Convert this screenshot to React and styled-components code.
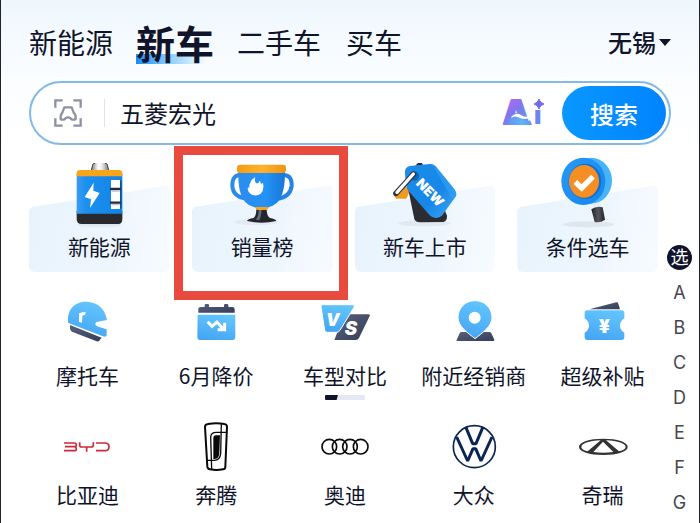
import React, { useState } from "react";
import styled, { createGlobalStyle, css } from "styled-components";

const GlobalStyle = createGlobalStyle`
  * {
    box-sizing: border-box;
  }
  body {
    margin: 0;
    background: #fff;
    color: #10142b;
    font-family: "Noto Sans CJK SC", "Noto Sans", sans-serif;
  }
  button, input {
    font-family: inherit;
    color: inherit;
    border: 0;
    padding: 0;
    background: none;
  }
  button {
    cursor: pointer;
  }
  a {
    color: inherit;
    text-decoration: none;
  }
`;

const ScanIcon = () => (
  <svg width="28" height="28" viewBox="0 0 84 84" fill="none" stroke="#8e91a2" strokeWidth="7">
    <path d="M4 26V4H26M58 4H80V26M80 58V80H58M26 80H4V58" />
    <path
      d="M31 25H53L59 41Q65 46 65 53V60Q65 62 62 62H55Q51 62 50 58Q42 52 34 58Q33 62 29 62H22Q20 62 20 60V53Q20 46 25 41Z"
      strokeLinejoin="round"
    />
  </svg>
);

const AiLogo = () => (
  <svg width="46" height="52" viewBox="-2 -12 46 52" role="img" aria-label="Ai">
    <defs>
      <linearGradient id="ai" x1="0" y1="0" x2="0.5" y2="1">
        <stop offset="0.2" stopColor="#b765f3" />
        <stop offset="0.55" stopColor="#7d78ee" />
        <stop offset="1" stopColor="#6a9cf3" />
      </linearGradient>
      <linearGradient id="wave">
        <stop offset="0" stopColor="#6f8cf0" />
        <stop offset="0.6" stopColor="#58b8f8" />
        <stop offset="1" stopColor="#6a8ff0" />
      </linearGradient>
    </defs>
    <text
      x="1"
      y="25"
      fontFamily="Inter"
      fontSize="33"
      fontWeight="900"
      fill="url(#ai)"
      stroke="url(#ai)"
      strokeWidth="2"
      strokeLinejoin="round"
    >
      A
    </text>
    <path d="M7 20Q14 16 20 20T28 21L30 26H5Z" fill="url(#wave)" />
    <path d="M10 17Q15 13 19 16T27 17L28 19Q22 21 18 19Q13 16 9 19Z" fill="#fff" />
    <text x="32" y="25" fontFamily="Inter" fontSize="25" fontWeight="900" fill="#6a86ef">
      ı
    </text>
    <path d="M37 0Q38 4 42 5Q38 6 37 10Q36 6 32 5Q36 4 37 0Z" fill="#7467e8" stroke="#7467e8" />
  </svg>
);

const BatteryIcon = () => (
  <svg width="70" height="70" viewBox="133 39 210 210">
    <defs>
      <linearGradient id="bat" x1="0" y1="0" x2="1" y2="0">
        <stop offset="0" stopColor="#3d9cf0" />
        <stop offset="0.2" stopColor="#1c90ef" />
        <stop offset="1" stopColor="#1183e6" />
      </linearGradient>
      <linearGradient id="cap">
        <stop offset="0" stopColor="#777" />
        <stop offset="0.4" stopColor="#fff" />
        <stop offset="0.6" stopColor="#eee" />
        <stop offset="1" stopColor="#777" />
      </linearGradient>
      <linearGradient id="floor" x1="0" y1="0" x2="0" y2="1">
        <stop offset="0" stopColor="#cfd6dd" />
        <stop offset="1" stopColor="#cfd6dd" stopOpacity="0" />
      </linearGradient>
    </defs>
    <ellipse cx="239" cy="239" rx="64" ry="12" fill="url(#floor)" />
    <path d="M214 78L218 60Q219 54 226 54H256Q263 54 264 60L268 78Z" fill="url(#cap)" />
    <path d="M215 76L219 60Q220 55 226 55M267 76L263 60Q262 55 256 55" stroke="#444" strokeWidth="3" fill="none" />
    <path d="M171 198V222Q171 237 186 237H296Q308 237 308 222V198Z" fill="#292a2e" />
    <path d="M171 86H308V206H171Z" fill="url(#bat)" />
    <path d="M171 94V85Q171 75 182 75H297Q308 75 308 85V94Z" fill="#f9a51c" />
    <path d="M222 113L195 156L214 163L211 189L240 144L221 137Z" fill="#fff" />
    <path d="M274 105H301V192H274Z" fill="#fff" />
    <path d="M301 104L306 108V188L301 192Z" fill="#0b55a0" />
    <path d="M271 132H303M271 173H303" stroke="#232c3b" strokeWidth="7" />
    <path d="M276 138H300M276 179H300" stroke="#b9c4d0" strokeWidth="4" />
  </svg>
);

const TrophyIcon = () => (
  <svg width="70" height="70" viewBox="172 54 210 210">
    <defs>
      <linearGradient id="cup">
        <stop offset="0" stopColor="#2c8cee" />
        <stop offset="0.6" stopColor="#2492f5" />
        <stop offset="1" stopColor="#1a76d9" />
      </linearGradient>
      <linearGradient id="rim">
        <stop offset="0" stopColor="#f59a12" />
        <stop offset="0.5" stopColor="#ffb22c" />
        <stop offset="1" stopColor="#f09513" />
      </linearGradient>
    </defs>
    <ellipse cx="260" cy="246" rx="66" ry="10" fill="#dfe5eb" opacity="0.7" />
    <path d="M215 105Q188 102 188 137Q190 172 232 176" fill="none" stroke="#2b8bec" strokeWidth="12" />
    <path d="M336 105Q367 102 366 137Q362 172 322 176" fill="none" stroke="#2484e6" strokeWidth="12" />
    <path d="M206 90H346Q347 150 331 178Q315 203 276 205Q236 203 220 178Q204 150 206 90Z" fill="url(#cup)" />
    <rect x="202" y="74" width="147" height="25" rx="9" fill="url(#rim)" />
    <path d="M232 243Q234 237 252 234Q260 228 260 208H291Q291 228 301 234Q318 237 320 243Q276 253 232 243Z" fill="#23262c" />
    <path d="M267 210H276Q274 230 270 240L258 239Q267 229 267 210Z" fill="#646a73" />
    <path d="M255 201H299L292 210H262Z" fill="#f4a623" />
    <path d="M257 111Q253 124 260 130Q268 131 270 122Q274 126 273 132L280 129Q285 150 273 161Q261 170 247 164Q231 155 235 142L240 144Q237 136 242 128Q245 118 257 111Z" fill="#fff" />
  </svg>
);

const NewTagIcon = () => (
  <svg width="70" height="70" viewBox="121 39 210 210">
    <defs>
      <linearGradient id="tag" x1="0" y1="0" x2="1" y2="1">
        <stop offset="0" stopColor="#1d8de8" />
        <stop offset="0.6" stopColor="#1687e8" />
        <stop offset="1" stopColor="#3fa9f5" />
      </linearGradient>
    </defs>
    <ellipse cx="224" cy="235" rx="78" ry="9" fill="#dfe5eb" opacity="0.8" />
    <path d="M132 151L166 122L181 138L170 161H140Z" fill="#f19a20" />
    <path d="M175 130L194 222Q198 232 210 232L281 231Q293 228 292 212L283 190Z" fill="#2b2d33" />
    <path d="M196 62L205 54H216L222 62Z" fill="#2b2d33" />
    <path
      d="M166 85Q164 67 180 63L240 57Q250 56 258 64L313 131Q322 143 319 153L278 211Q265 224 248 216Q242 213 236 206L176 137Q170 130 168 112Z"
      fill="url(#tag)"
    />
    <path d="M258 64L313 131Q322 143 319 153L310 166L248 58Z" fill="#33a4f6" opacity="0.6" />
    <circle cx="194" cy="93" r="14" fill="#0b63b6" />
    <path d="M191 88L139 145" stroke="#35353b" strokeWidth="17" strokeLinecap="round" />
    <path d="M191 87L142 142" stroke="#fff" strokeWidth="10" strokeLinecap="round" />
    <text
      transform="translate(197 117) rotate(46)"
      fontFamily="Inter"
      fontSize="40"
      fontWeight="900"
      fill="#fff"
    >
      NEW
    </text>
  </svg>
);

const FilterIcon = () => (
  <svg width="70" height="70" viewBox="144 39 210 210" overflow="visible">
    <defs>
      <linearGradient id="lens" x1="0" y1="0" x2="1" y2="1">
        <stop offset="0" stopColor="#2a9af5" />
        <stop offset="1" stopColor="#1585ee" />
      </linearGradient>
      <linearGradient id="grip">
        <stop offset="0" stopColor="#1f2125" />
        <stop offset="0.5" stopColor="#55585e" />
        <stop offset="1" stopColor="#1f2125" />
      </linearGradient>
    </defs>
    <ellipse cx="250" cy="238" rx="78" ry="9" fill="#dbe3ea" opacity="0.8" />
    <ellipse cx="258" cy="107" rx="63" ry="69" fill="#45b4f9" />
    <path d="M262 176L286 172L289 190L266 194Z" fill="#e9edf1" />
    <ellipse cx="235" cy="109" rx="66" ry="71" fill="url(#lens)" />
    <ellipse cx="240" cy="109" rx="49" ry="53" fill="#136fd0" />
    <ellipse cx="237" cy="109" rx="45" ry="49" fill="#f58f24" />
    <path d="M211 111L230 129L264 95" fill="none" stroke="#fff" strokeWidth="16" />
    <path d="M259 193Q274 182 293 187L300 224Q287 234 269 231Z" fill="url(#grip)" />
  </svg>
);

// shared gradients of the small two-tone icons
const Tones = ({ id }) => (
  <defs>
    <linearGradient id={`${id}-blue`} x1="0.6" y1="0" x2="0.3" y2="1">
      <stop offset="0" stopColor="#62c5fd" />
      <stop offset="1" stopColor="#45a5f4" />
    </linearGradient>
    <linearGradient id={`${id}-dark`} x1="0" y1="0" x2="1" y2="1">
      <stop offset="0" stopColor="#59627c" />
      <stop offset="1" stopColor="#343c57" />
    </linearGradient>
  </defs>
);

const HelmetIcon = () => (
  <svg width="50" height="44" viewBox="96 33 150 132">
    <Tones id="helmet" />
    <path d="M120 108L215 146L207 156Q205 158 200 157L126 128Q120 125 120 118Z" fill="url(#helmet-dark)" />
    <path
      d="M115 102C109 62 134 38 169 38C204 39 226 60 231 93L203 98Q193 101 197 108Q200 113 208 114L230 121V138Q229 145 219 142Z"
      fill="url(#helmet-blue)"
    />
    <path d="M147 73Q158 68 167 68L166 77L157 80L156 101L147 99Z" fill="#fff" />
  </svg>
);

const PriceDropIcon = () => (
  <svg width="50" height="44" viewBox="483 33 150 132">
    <Tones id="drop" />
    <path d="M505 71V61Q505 54 513 54H524V49Q524 45 528 45H533Q537 45 537 49V54H582V49Q582 45 586 45H591Q595 45 595 49V54H607Q614 54 614 61V71Z" fill="url(#drop-dark)" />
    <path d="M503 77H616V143Q616 153 606 153H512Q502 153 502 143Z" fill="url(#drop-blue)" />
    <path d="M533 98L546 112L561 99L579 119" fill="none" stroke="#fff" strokeWidth="9" />
    <path d="M563 122H584V101" fill="none" stroke="#fff" strokeWidth="9" />
  </svg>
);

const CompareIcon = () => (
  <svg width="50" height="44" viewBox="90 33 150 132">
    <Tones id="vs" />
    <path d="M163 76H236Q241 76 239 81L207 147Q204 153 197 153H133Z" fill="url(#vs-dark)" />
    <path
      d="M97 47H188Q196 47 192 55L150 124Q146 130 139 130H112Q105 130 104 123L93 53Q92 47 97 47Z"
      fill="url(#vs-blue)"
      stroke="#fff"
      strokeWidth="3"
    />
    <text x="108" y="111" fontFamily="Inter" fontSize="51" fontWeight="900" fontStyle="italic" fill="#fff">
      V
    </text>
    <text x="164" y="137" fontFamily="Inter" fontSize="56" fontWeight="900" fontStyle="italic" fill="#fff">
      S
    </text>
  </svg>
);

const DealerIcon = () => (
  <svg width="50" height="44" viewBox="475 33 150 132">
    <Tones id="pin" />
    <path d="M512 129H596Q600 129 602 133L611 152Q612 156 607 156H501Q496 156 498 152L507 133Q509 129 512 129Z" fill="url(#pin-dark)" />
    <path
      d="M553 35C583 35 604 57 604 86C604 112 572 134 553 149C534 134 502 112 502 86C502 57 523 35 553 35Z"
      fill="url(#pin-blue)"
      stroke="#fff"
      strokeWidth="3"
    />
    <circle cx="552" cy="86" r="18" fill="#fff" />
  </svg>
);

const CouponIcon = () => (
  <svg width="50" height="44" viewBox="142 33 150 132">
    <Tones id="coupon" />
    <path d="M176 61L257 40Q262 39 263 44L268 61Z" fill="url(#coupon-dark)" />
    <path
      d="M170 64H272Q281 64 281 72V88Q268 96 268 110Q268 122 281 131V144Q281 153 272 153H170Q162 153 162 144V131Q175 122 175 110Q175 96 162 88V72Q162 64 170 64Z"
      fill="url(#coupon-blue)"
    />
    <text x="221" y="131" textAnchor="middle" fontFamily="Inter" fontSize="58" fontWeight="900" fill="#fff">
      ¥
    </text>
  </svg>
);

const BydLogo = () => (
  <svg width="50" height="50" viewBox="96 36 150 150" fill="none" stroke="#cb2a3a" strokeWidth="5">
    <path d="M102 99H133Q139 99 139 104Q139 110 133 110H105M133 110Q139 111 139 116Q139 122 133 122H102" />
    <path d="M149 97V104Q149 111 156 111H184Q190 111 190 104V97M170 111V125" />
    <path d="M198 99H227Q237 100 237 110Q237 121 227 122H198" />
  </svg>
);

const BestuneLogo = () => (
  <svg width="50" height="50" viewBox="483 36 150 150" fill="none" stroke="#090909">
    <path d="M534 42Q559 38 583 42Q591 43 591 51L586 170Q586 177 579 178Q559 182 540 178Q533 177 532 170L525 51Q525 43 534 42Z" strokeWidth="6" />
    <path d="M574 43L572 131Q570 151 553 151H532M588 67H559Q543 67 542 81L545 177" strokeWidth="4" />
    <path d="M558 76Q550 76 550 85V147H554Q568 146 568 129L570 76Z" fill="#090909" stroke="none" />
  </svg>
);

const AudiLogo = () => (
  <svg width="50" height="50" viewBox="90 36 150 150" fill="none" stroke="#0c0c0c" strokeWidth="5">
    <circle cx="118" cy="110" r="22" />
    <circle cx="149" cy="110" r="22" />
    <circle cx="180" cy="110" r="22" />
    <circle cx="212" cy="110" r="22" />
  </svg>
);

const VwLogo = () => (
  <svg width="50" height="50" viewBox="475 36 150 150" fill="none" stroke="#0b2553">
    <circle cx="551" cy="110" r="63" strokeWidth="5" />
    <path d="M526 53L546 101H556L576 53" strokeWidth="9" strokeLinejoin="bevel" />
    <path d="M498 81L531 153L547 116H555L571 153L604 81" strokeWidth="9" strokeLinejoin="bevel" />
  </svg>
);

const CheryLogo = () => (
  <svg width="50" height="50" viewBox="142 66 150 150">
    <path
      d="M218 116C260 116 291 126 291 141C291 155 260 165 218 165C176 165 145 155 145 141C145 126 176 116 218 116ZM210 121C174 123 152 131 152 141C152 146 159 151 171 154ZM226 121L265 154C278 151 285 146 285 141C285 131 262 123 226 121ZM217 125L188 156Q218 160 248 156Z"
      fill="#333"
      fillRule="evenodd"
    />
  </svg>
);

const tabs = ["新能源", "新车", "二手车", "买车"];

const cards = [
  { name: "新能源", icon: <BatteryIcon /> },
  { name: "销量榜", icon: <TrophyIcon />, marked: true },
  { name: "新车上市", icon: <NewTagIcon /> },
  { name: "条件选车", icon: <FilterIcon /> },
];

const services = [
  { name: "摩托车", icon: <HelmetIcon /> },
  { name: "6月降价", icon: <PriceDropIcon /> },
  { name: "车型对比", icon: <CompareIcon /> },
  { name: "附近经销商", icon: <DealerIcon /> },
  { name: "超级补贴", icon: <CouponIcon /> },
];

const brands = [
  { name: "比亚迪", icon: <BydLogo /> },
  { name: "奔腾", icon: <BestuneLogo /> },
  { name: "奥迪", icon: <AudiLogo /> },
  { name: "大众", icon: <VwLogo /> },
  { name: "奇瑞", icon: <CheryLogo /> },
];

const letters = ["选", "A", "B", "C", "D", "E", "F", "G"];

function App() {
  const [active, setActive] = useState("新车");
  const [keyword, setKeyword] = useState("五菱宏光");

  return (
    <Page>
      <GlobalStyle />
      <Header>
        <Tabs>
          {tabs.map((tab) => (
            <Tab key={tab} $active={tab === active} onClick={() => setActive(tab)}>
              {tab}
            </Tab>
          ))}
        </Tabs>
        <City>
          无锡
          <Caret />
        </City>
      </Header>

      <Search onSubmit={(e) => e.preventDefault()}>
        <ScanButton type="button" aria-label="扫一扫">
          <ScanIcon />
        </ScanButton>
        <SearchInput aria-label="搜索" value={keyword} onChange={(e) => setKeyword(e.target.value)} />
        <AiLogo />
        <SearchButton type="submit">搜索</SearchButton>
      </Search>

      <Body>
        <Content>
          <Cards>
            {cards.map((card) => (
              <Card key={card.name} href="#" $marked={card.marked}>
                {card.icon}
                <Label>{card.name}</Label>
              </Card>
            ))}
          </Cards>
          <Grid>
            {services.map((item) => (
              <Item key={item.name} href="#" $gap={17}>
                {item.icon}
                <Label>{item.name}</Label>
              </Item>
            ))}
          </Grid>
          <Pager />
          <Grid>
            {brands.map((item) => (
              <Item key={item.name} href="#" $gap={8}>
                {item.icon}
                <Label>{item.name}</Label>
              </Item>
            ))}
          </Grid>
        </Content>
        <Index>
          {letters.map((letter, i) => (
            <Letter key={letter} href="#" $active={i === 0}>
              {letter}
            </Letter>
          ))}
        </Index>
      </Body>
    </Page>
  );
}

const Page = styled.div`
  min-height: 100vh;
  border: solid #20232b;
  border-width: 0 1px;
  background: linear-gradient(#eef7fe, #fbfdff 80px, #fff 150px);
`;

const Header = styled.header`
  display: flex;
  justify-content: space-between;
  align-items: center;
  padding: 16px 28px 13px;
`;

const Tabs = styled.nav`
  display: flex;
  align-items: center;
  gap: 25px;
`;

const Tab = styled.button`
  font-size: 28px;
  line-height: 52px;
  ${(props) =>
    props.$active &&
    css`
      margin: 0 -2px;
      font-size: 39px;
      font-weight: 700;
      background: linear-gradient(90deg, #1c8bf7, #8fd0fc 50%, #fff0) 0 38px / 70px 10px no-repeat;
    `}
`;

const City = styled.button`
  display: flex;
  align-items: center;
  gap: 3px;
  font-size: 24px;
  font-weight: 500;
  line-height: 36px;
`;

const Caret = styled.span`
  border: 6px solid transparent;
  border-top: 7px solid #10142b;
  border-bottom: 0;
`;

const Search = styled.form`
  display: flex;
  align-items: center;
  height: 64px;
  margin: 0 28px;
  padding: 0 3px 0 23px;
  border: 2px solid #82b9e6;
  border-radius: 32px;
  background: #fff;
`;

const ScanButton = styled.button`
  display: flex;
  padding-right: 22px;
  border-right: 1px solid #e3e4ea;
`;

const SearchInput = styled.input`
  flex: 1;
  min-width: 0;
  padding: 0 15px;
  font-size: 24px;
  line-height: 36px;
  outline: none;
`;

const SearchButton = styled.button`
  width: 104px;
  height: 54px;
  margin-left: 16px;
  border-radius: 27px;
  background: linear-gradient(90deg, #0a97ff, #0084ff);
  color: #fff;
  font-size: 24px;
  font-weight: 500;
`;

const Body = styled.div`
  display: flex;
  padding: 0 7px 0 22px;
`;

const Content = styled.main`
  flex: 1;
  min-width: 0;
`;

const Cards = styled.div`
  display: grid;
  grid-template-columns: repeat(4, 1fr);
  gap: 22px;
  padding: 0 9px 28px 6px;
`;

const Card = styled.a`
  position: relative;
  display: flex;
  flex-direction: column;
  align-items: center;
  gap: 4px;
  padding: 13px 0 12px;
  isolation: isolate;

  &::before {
    content: "";
    position: absolute;
    z-index: -1;
    inset: 40px 0 0;
    border-radius: 6px;
    background: linear-gradient(100deg, #e7f3fc, #eef6fd 60%, #f7fbff);
    clip-path: polygon(0 25px, 3px 22px, 100% 0, 100% 100%, 0 100%);
  }

  ${(props) =>
    props.$marked &&
    css`
      &::after {
        content: "";
        position: absolute;
        inset: 1px -15px -28px -18px;
        border: 9px solid #e84a3d;
      }
    `}
`;

const Label = styled.span`
  font-size: 21px;
  line-height: 28px;
  white-space: nowrap;
`;

const Grid = styled.div`
  display: grid;
  grid-template-columns: repeat(5, 1fr);
`;

const Item = styled.a`
  display: flex;
  flex-direction: column;
  align-items: center;
  gap: ${(props) => props.$gap}px;
`;

const Pager = styled.div`
  width: 40px;
  height: 5px;
  margin: 6px auto 22px;
  border-radius: 1px;
  background: linear-gradient(105deg, #10142b 12px, #e5e8f2 13px);
`;

const Index = styled.nav`
  display: flex;
  flex-direction: column;
  align-items: center;
  gap: 10px;
  width: 25px;
  padding-top: 100px;
`;

const Letter = styled.a`
  width: 25px;
  border-radius: 50%;
  font-family: Inter, "Noto Sans CJK SC", sans-serif;
  font-size: 18px;
  line-height: 25px;
  text-align: center;
  color: #45474f;
  ${(props) =>
    props.$active &&
    css`
      background: #10142b;
      color: #fff;
    `}
`;

export default App;
